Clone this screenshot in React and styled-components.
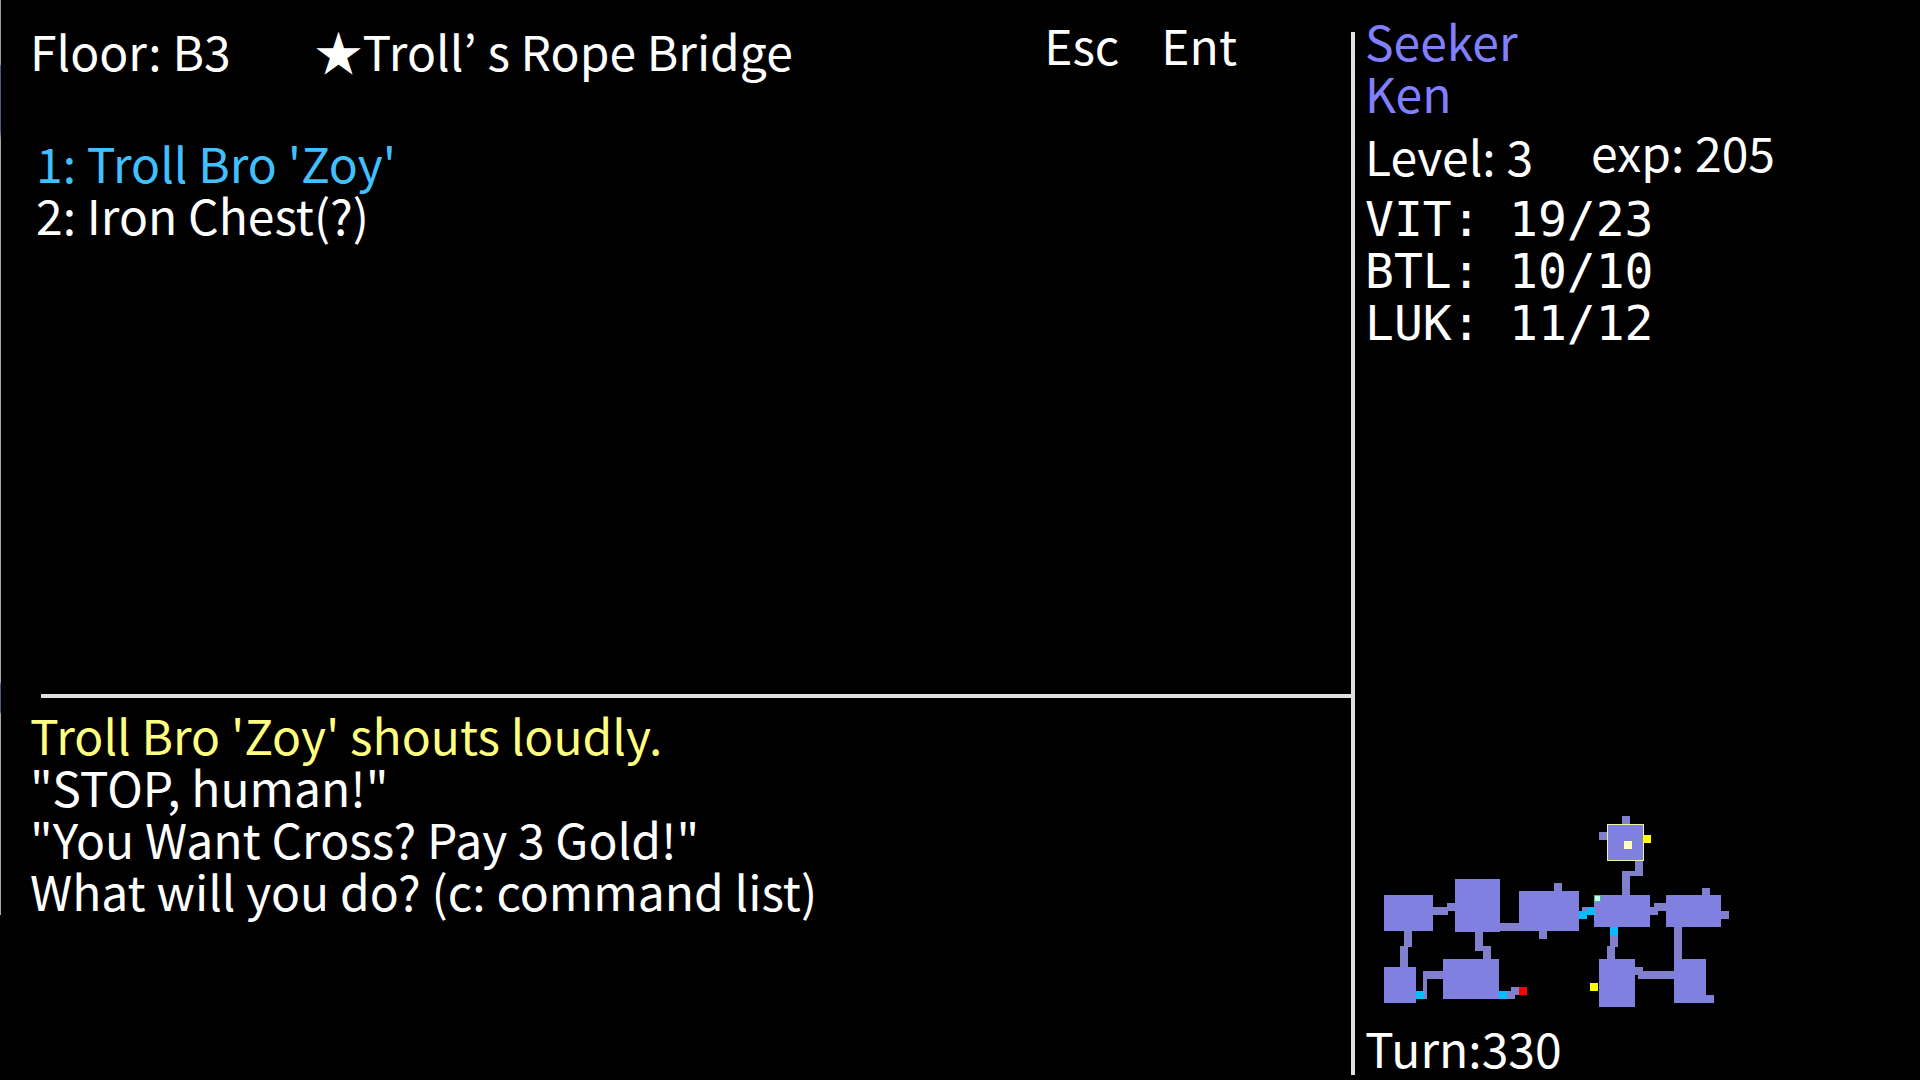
import React from "react"
import styled, { createGlobalStyle } from "styled-components"

const Global = createGlobalStyle`
*{box-sizing:border-box;}
body{
  margin:0;
  background:#000;
  color:#fff;
  font-family:"Noto Sans CJK JP","Liberation Sans",sans-serif;
  font-size:48px;
  line-height:52px;
}
p,h1,h2,ol,ul,dl,dd{
  margin:0;
  padding:0;
  font-size:inherit;
  font-weight:400;
}
`
const Screen = styled.div`
display:flex;
min-height:100vh;
padding-bottom:5px;
overflow:hidden;
`
// thin strip of the window behind the game
const Edge = styled.div`
width:1px;
height:915px;
background:linear-gradient(#9a9ca8 64px,#4a5888 66px,#4a5888 130px,#a8a8a8 140px,#a8a8a8 682px,#4a5888 684px,#4a5888 712px,#a8a8a8 714px);
`
const Main = styled.main`
flex:1;
display:flex;
flex-direction:column;
`
const Header = styled.header`
display:flex;
align-items:flex-start;
padding:18px 114px 0 29px;
white-space:nowrap;
`
const Floor = styled.p`
padding-top:6px;
`
const Place = styled.h1`
flex:1;
padding:6px 0 0 84px;
`
const Keys = styled.div`
display:flex;
gap:42px;
`
const Key = styled.button`
background:none;
border:0;
padding:0;
color:inherit;
font:inherit;
cursor:pointer;
`
const Things = styled.ol`
flex:1;
list-style:none;
padding:60px 0 0 35px;
`
const Thing = styled.li`
color:${p => p.$active ? "#40c0ff" : "#fff"};
`
const Log = styled.section`
height:381px;
margin-left:40px;
border-top:4px solid #e0e0e0;
`
const Lines = styled.div`
margin-left:-11px;
padding-top:10px;
white-space:nowrap;
`
const Line = styled.p`
color:${p => p.$loud ? "#ffff80" : "#fff"};
`
const Side = styled.aside`
width:569px;
margin-top:32px;
padding-left:10px;
border-left:4px solid #e0e0e0;
display:flex;
flex-direction:column;
`
const Who = styled.h2`
color:#8080ff;
margin-top:-18px;
`
const Growth = styled.div`
display:flex;
gap:58px;
padding-top:7px;
`
const Level = styled.p`
padding-top:4px;
`
const Stats = styled.dl`
display:grid;
grid-template-columns:144px auto;
padding-top:12px;
font-family:"DejaVu Sans Mono",monospace;
`
const Map = styled.svg`
display:block;
margin:auto 0 14px 19px;
`
const Turn = styled.p`
height:54px;
`

const things = [
    { name: "Troll Bro 'Zoy'", active: true },
    { name: "Iron Chest(?)" },
]
const log = [
    { text: "Troll Bro 'Zoy' shouts loudly.", loud: true },
    { text: '"STOP, human!"' },
    { text: '"You Want Cross? Pay 3 Gold!"' },
    { text: "What will you do? (c: command list)" },
]
const stats = [["VIT", "19/23"], ["BTL", "10/10"], ["LUK", "11/12"]]

// x, y, width, height
const halls = [
    [62, 92, 16, 8], [77, 88, 9, 8], [34, 115, 8, 17], [30, 131, 8, 22],
    [128, 108, 22, 8], [105, 116, 8, 20], [105, 131, 16, 5], [113, 131, 8, 13],
    [53, 156, 21, 8], [53, 156, 4, 28], [184, 68, 8, 8], [169, 116, 8, 8],
    [137, 176, 8, 8], [141, 172, 8, 8],
    [252, 1, 8, 8], [229, 17, 8, 8], [265, 46, 8, 15], [252, 56, 13, 5], [252, 56, 8, 24],
    [212, 92, 8, 8], [280, 92, 8, 8], [284, 88, 12, 8],
    [332, 73, 8, 8], [351, 96, 8, 8], [240, 119, 8, 13], [237, 131, 8, 13],
    [264, 152, 9, 8], [268, 156, 37, 8], [304, 111, 8, 34],
]
const rooms = [
    [14, 80, 49, 36], [85, 64, 45, 53], [149, 76, 60, 40], [14, 152, 32, 36],
    [73, 144, 56, 40], [224, 80, 56, 32], [296, 80, 55, 32],
    [229, 144, 36, 48], [304, 144, 32, 44], [336, 180, 8, 8],
]
// x, y, color
const marks = [
    [46, 176, "#00c0ff"], [129, 176, "#00c0ff"], [209, 96, "#00c0ff"], [217, 92, "#00c0ff"],
    [240, 112, "#00c0ff"], [149, 172, "#ff0000"], [220, 168, "#ffff00"], [273, 20, "#ffff00"],
]

const Minimap = () => <Map width="360" height="192" viewBox="14 0 360 192" shapeRendering="crispEdges" role="img" aria-label="Map">
    {halls.map((r, i) => <rect key={i} x={r[0]} y={r[1]} width={r[2]} height={r[3]} fill="#8080cc" />)}
    {rooms.map((r, i) => <rect key={i} x={r[0]} y={r[1]} width={r[2]} height={r[3]} fill="#8080e0" />)}
    <rect x="237" y="9" width="37" height="37" fill="#f0f0a0" />
    <rect x="238" y="10" width="35" height="35" fill="#8080e0" />
    {marks.map((m, i) => <rect key={i} x={m[0]} y={m[1]} width="8" height="8" fill={m[2]} />)}
    <rect x="254" y="26" width="8" height="8" fill="#ffffc0" />
    <rect x="224" y="80" width="7" height="7" fill="#40c090" />
    <rect x="225" y="81" width="5" height="5" fill="#c8ffe8" />
</Map>

const App = () => {
    return <>
    <Global/>
    <Screen>
        <Edge/>
        <Main>
            <Header>
                <Floor>Floor: B3</Floor>
                <Place>★Troll’ s Rope Bridge</Place>
                <Keys><Key>Esc</Key><Key>Ent</Key></Keys>
            </Header>
            <Things>
                {things.map((t, i) => <Thing key={t.name} $active={t.active}>{i + 1}: {t.name}</Thing>)}
            </Things>
            <Log>
                <Lines>{log.map((l) => <Line key={l.text} $loud={l.loud}>{l.text}</Line>)}</Lines>
            </Log>
        </Main>
        <Side>
            <Who>Seeker<br/>Ken</Who>
            <Growth><Level>Level: 3</Level><p>exp: 205</p></Growth>
            <Stats>{stats.map(([k, v]) => <React.Fragment key={k}><dt>{k}:</dt><dd>{v}</dd></React.Fragment>)}</Stats>
            <Minimap/>
            <Turn>Turn:330</Turn>
        </Side>
    </Screen>
    </>
}

export default App
